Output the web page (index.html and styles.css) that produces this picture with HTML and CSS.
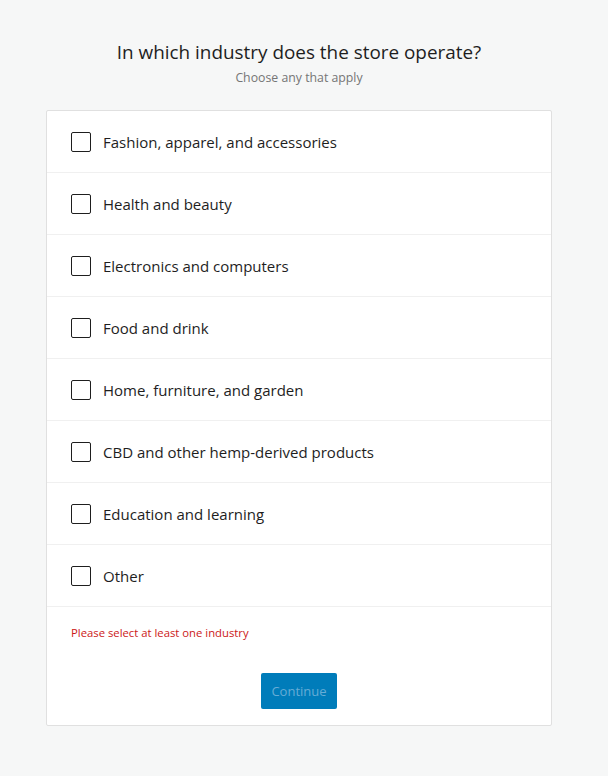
FILE: index.html
```html
<!DOCTYPE html>
<html lang="en">
<head>
<meta charset="utf-8">
<title>Industry</title>
<link rel="stylesheet" href="styles.css">
</head>
<body>
<div class="page">
  <header class="head">
    <h1 class="title">In which industry does the store operate?</h1>
    <p class="subtitle">Choose any that apply</p>
  </header>
  <div class="card">
    <ul class="list">
      <li class="item"><span class="box"></span><span class="label">Fashion, apparel, and accessories</span></li>
      <li class="item"><span class="box"></span><span class="label">Health and beauty</span></li>
      <li class="item"><span class="box"></span><span class="label">Electronics and computers</span></li>
      <li class="item"><span class="box"></span><span class="label">Food and drink</span></li>
      <li class="item"><span class="box"></span><span class="label">Home, furniture, and garden</span></li>
      <li class="item"><span class="box"></span><span class="label">CBD and other hemp-derived products</span></li>
      <li class="item"><span class="box"></span><span class="label">Education and learning</span></li>
      <li class="item"><span class="box"></span><span class="label">Other</span></li>
    </ul>
    <p class="error">Please select at least one industry</p>
    <div class="actions">
      <button class="btn" disabled>Continue</button>
    </div>
  </div>
</div>
</body>
</html>
```

FILE: styles.css
```css
html, body {
  margin: 0;
  padding: 0;
  background: #f6f7f7;
}
body {
  font-family: "Open Sans", "Noto Sans", sans-serif;
  color: #1e1e1e;
}
.page {
  width: 506px;
  margin-left: 46px;
  padding-top: 38px;
}
.head {
  text-align: center;
}
.title {
  margin: 0;
  font-size: 18.9px;
  line-height: 28px;
  font-weight: 400;
  color: #1e1e1e;
}
.subtitle {
  margin: 3px 0 0;
  font-size: 12.3px;
  line-height: 17px;
  color: #757575;
}
.card {
  margin-top: 24px;
  background: #fff;
  border: 1px solid #e0e0e0;
  border-radius: 2px;
  padding-bottom: 16px;
}
.list {
  list-style: none;
  margin: 0;
  padding: 0;
}
.item {
  display: flex;
  align-items: center;
  gap: 12px;
  height: 61px;
  padding: 0 24px;
  border-bottom: 1px solid #f0f0f0;
}
.box {
  box-sizing: border-box;
  width: 20px;
  height: 20px;
  border: 1.5px solid #1e1e1e;
  border-radius: 2px;
  flex: none;
}
.label {
  font-size: 15px;
  line-height: 20px;
}
.error {
  margin: 18px 24px 0;
  font-size: 11.3px;
  line-height: 16px;
  color: #cc1818;
}
.actions {
  display: flex;
  justify-content: center;
  margin-top: 32px;
}
.btn {
  font-family: inherit;
  height: 36px;
  width: 76px;
  padding: 0;
  border: 0;
  border-radius: 2px;
  background: #007cba;
  color: #66acd6;
  font-size: 13px;
}
```
